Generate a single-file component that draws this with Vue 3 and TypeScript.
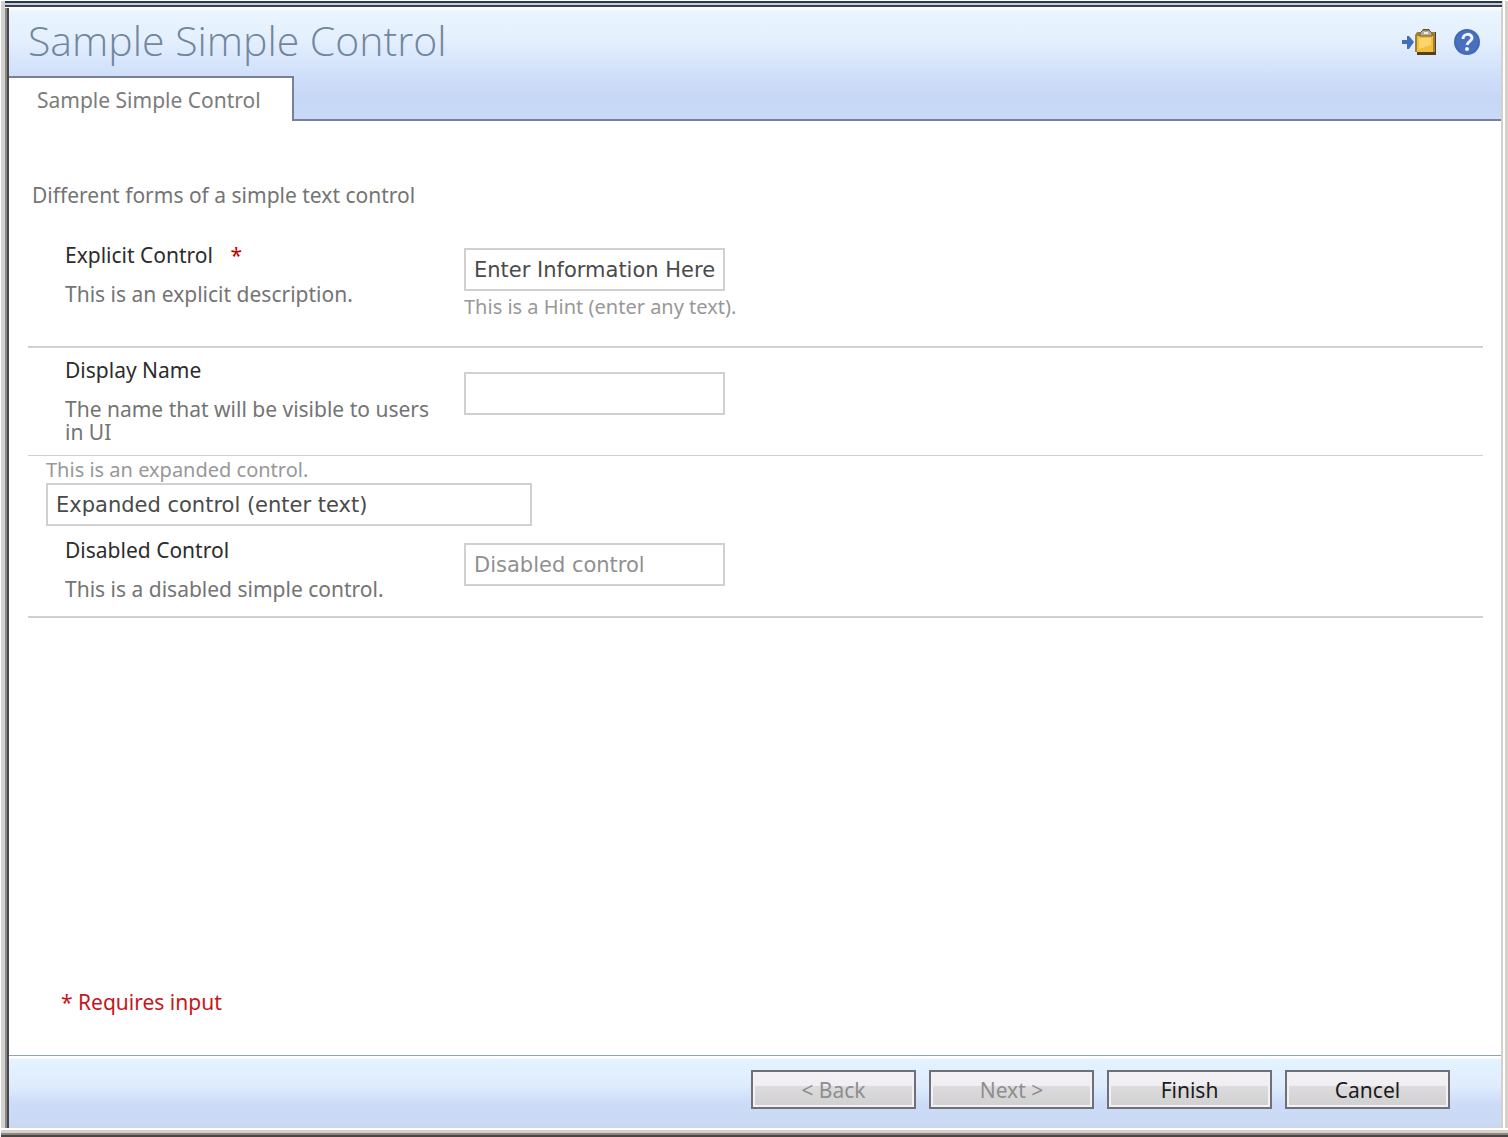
<script setup lang="ts">
import { ref } from 'vue'

const explicitText = ref('Enter Information Here')
const displayName = ref('')
const expandedText = ref('Expanded control (enter text)')
const disabledText = ref('Disabled control')

const buttons = [
  { label: '< Back', disabled: true },
  { label: 'Next >', disabled: true },
  { label: 'Finish', disabled: false },
  { label: 'Cancel', disabled: false },
]
</script>

<template>
  <div class="window">
    <div class="dialog">
      <header class="head">
        <div class="title-row">
          <h1>Sample Simple Control</h1>
          <div class="tools">
            <button type="button" class="tool" aria-label="Add to task pad">
              <svg width="36" height="28" viewBox="0 0 36 28">
                <path d="M1 12h5V8h2l5 6-5 7H6v-5H1z" fill="#3f6fbd" />
                <path d="M16 4h4l2-3h6l2 3h5v23H16z" fill="#54401f" />
                <path d="M14 7l2-3h18v20H14z" fill="#a1803c" />
                <path d="M16 8h16v16H16z" fill="#f3bd3e" />
                <path d="M18 10h12v7l-12 4z" fill="#fcd566" />
                <path d="M19 5l3-3h6l3 3v3H19z" fill="#b9ad8e" stroke="#6e5f42" />
                <path d="M23 4h4v2h-4z" fill="#f4f0e0" />
              </svg>
            </button>
            <button type="button" class="tool" aria-label="Help">
              <svg width="28" height="28" viewBox="0 0 28 28">
                <circle cx="14" cy="14" r="13" fill="#4169b4" />
                <circle cx="14" cy="14" r="11" fill="#4870be" />
                <path d="M10 11c0-6 9-6 9-1 0 3-4 3-5 7" fill="none" stroke="#eef3fc" stroke-width="3" />
                <circle cx="14" cy="21" r="2" fill="#eef3fc" />
              </svg>
            </button>
          </div>
        </div>
        <nav class="tabs">
          <a href="#form" class="tab">Sample Simple Control</a>
          <span class="tab-rest"></span>
        </nav>
      </header>

      <main id="form" class="body">
        <p class="intro">Different forms of a simple text control</p>

        <div class="row first">
          <div class="info">
            <label for="explicit">Explicit Control <span class="star">*</span></label>
            <p>This is an explicit description.</p>
          </div>
          <div class="field">
            <input id="explicit" v-model="explicitText" type="text" />
            <p class="hint">This is a Hint (enter any text).</p>
          </div>
        </div>

        <div class="row second">
          <div class="info">
            <label for="display">Display Name</label>
            <p>The name that will be visible to users in UI</p>
          </div>
          <div class="field">
            <input id="display" v-model="displayName" type="text" />
          </div>
        </div>

        <div class="expanded">
          <label for="expanded" class="hint">This is an expanded control.</label>
          <input id="expanded" v-model="expandedText" type="text" />
        </div>

        <div class="row third">
          <div class="info">
            <label for="disabled">Disabled Control</label>
            <p>This is a disabled simple control.</p>
          </div>
          <div class="field">
            <input id="disabled" v-model="disabledText" type="text" disabled />
          </div>
        </div>

        <p class="required">* Requires input</p>
      </main>

      <footer class="foot">
        <button v-for="b in buttons" :key="b.label" type="button" class="btn" :disabled="b.disabled">
          {{ b.label }}
        </button>
      </footer>
    </div>
  </div>
</template>

<style>
body {
  margin: 0;
  background: #fff;
}
</style>

<style scoped>
* {
  box-sizing: border-box;
}
.window {
  min-height: 100vh;
  display: flex;
  padding: 1px 0 0 1px;
  font-family: "Noto Sans", "Open Sans", sans-serif;
  font-size: 21px;
  line-height: 23px;
  color: #747474;
}
.dialog {
  flex: 1;
  display: flex;
  flex-direction: column;
  border-style: solid;
  border-width: 7px 7px 9px 8px;
  border-color: transparent;
  background:
    linear-gradient(#fff, #fff) padding-box,
    linear-gradient(#283850 2px, #c5cddb 2px 4px, #38424e 4px 6px, #fff 6px 7px, transparent 7px) 4px 0 / calc(100% - 10px) 100% no-repeat border-box,
    linear-gradient(to top, #484542 2px, #8b8680 2px 4px, #d6d2cb 4px 7px, #fff 7px 9px, transparent 9px) border-box,
    linear-gradient(to right, #d4d2d0 4px, #8a8886 4px 6px, #484646 6px 8px, transparent 8px) border-box,
    linear-gradient(to left, #d4d0cb 3px, #fff 3px 5px, #d4d0cb 5px 7px, transparent 7px) border-box;
}
.head {
  background: linear-gradient(#fff 0, #e8f4fe 4px, #e5f0fe 30px, #cfdffa 68px, #c6d6f5 90px, #c9daf8 100%);
}
.title-row {
  display: flex;
  justify-content: space-between;
  height: 68px;
  padding: 0 20px 0 19px;
}
h1 {
  margin: 0;
  font-family: "Open Sans", "Noto Sans", sans-serif;
  font-size: 41px;
  line-height: 64px;
  font-weight: 300;
  color: #71879d;
}
.tools {
  display: flex;
  gap: 16px;
  padding-top: 20px;
}
.tool {
  height: 28px;
  padding: 0;
  border: 0;
  background: none;
}
.tool svg {
  display: block;
}
.tabs {
  display: flex;
  height: 45px;
}
.tab {
  padding: 11px 31px 0 28px;
  border: solid #77829a;
  border-width: 2px 2px 0 0;
  background: #fff;
  color: #7c7c7c;
  text-decoration: none;
}
.tab-rest {
  flex: 1;
  border-bottom: 2px solid #77829a;
}
.body {
  flex: 1;
  display: flex;
  flex-direction: column;
  padding: 63px 18px 0 19px;
}
p {
  margin: 0;
}
.intro {
  padding-left: 4px;
}
.row {
  display: flex;
  border-bottom: 2px solid #d0d0d0;
  padding-left: 37px;
}
.first {
  margin-top: 37px;
  height: 104px;
}
.second {
  padding-top: 11px;
  height: 108px;
  border-bottom-width: 1px;
}
.third {
  padding-top: 13px;
  height: 92px;
}
.info {
  width: 399px;
  padding-right: 24px;
}
.info label {
  display: block;
  color: #2c2c2c;
}
.info p {
  margin-top: 16px;
}
.star {
  margin-left: 12px;
  color: #c00000;
}
input {
  display: block;
  width: 261px;
  height: 43px;
  padding: 0 0 0 8px;
  border: 2px solid #d0d0d0;
  border-radius: 0;
  background: #fff;
  font-family: "DejaVu Sans", sans-serif;
  font-size: 21px;
  color: #4a4a4a;
}
input:disabled {
  color: #909090;
}
.first .field,
.third .field {
  padding-top: 4px;
}
.second .field {
  padding-top: 13px;
}
.hint {
  color: #989898;
  font-size: 20px;
}
.field .hint {
  margin-top: 4px;
}
.expanded {
  padding: 2px 0 0 18px;
}
.expanded .hint {
  display: block;
  height: 25px;
}
.expanded input {
  width: 486px;
}
.required {
  margin-top: auto;
  padding: 0 0 41px 33px;
  color: #c51620;
}
.foot {
  display: flex;
  justify-content: flex-end;
  gap: 13px;
  height: 73px;
  padding: 14px 51px 0 0;
  border-top: 1px solid #8fa5ab;
  background: linear-gradient(#fff 2px, #e4f3ff 3px, #deecfd 30px, #ccdcf8 48px, #cadaf5 68px, #ccd6e6);
}
.btn {
  width: 165px;
  height: 39px;
  padding: 0;
  border: 2px solid #70707a;
  border-radius: 0;
  box-shadow: inset 0 0 0 2px #f3f1f3;
  background: linear-gradient(#f2eff2 38%, #dddadd 42%, #d0d0d0);
  font-family: "Noto Sans", "Open Sans", sans-serif;
  font-size: 21px;
  color: #1c1c1c;
}
.btn:disabled {
  color: #8e8e8e;
}
</style>
